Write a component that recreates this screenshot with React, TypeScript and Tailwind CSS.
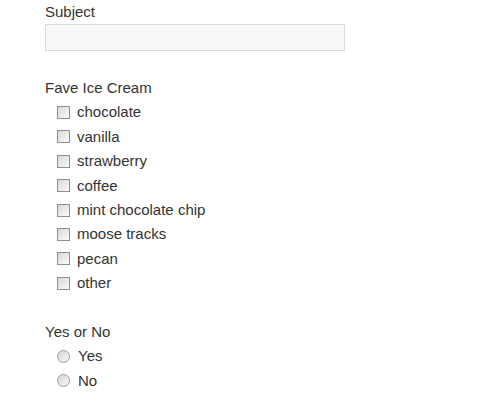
const flavors = [
  "chocolate",
  "vanilla",
  "strawberry",
  "coffee",
  "mint chocolate chip",
  "moose tracks",
  "pecan",
  "other",
];

export default function App() {
  return (
    <div className="min-h-[403px] bg-white pl-[45px] pt-[2px] font-['Liberation_Sans',Arial,sans-serif] text-[15px] text-[#333]">
      <label className="block leading-[20px]">Subject</label>
      <input
        type="text"
        className="mt-[2px] block h-[27px] w-[300px] border border-[#dcdcdc] bg-[#f7f7f7] outline-none"
      />

      <div className="mt-[25px] leading-[24.4px]">Fave Ice Cream</div>
      <div className="pl-[12px]">
        {flavors.map((f) => (
          <label key={f} className="flex h-[24.4px] items-center">
            <input
              type="checkbox"
              className="m-0 h-[13px] w-[13px] appearance-none border border-[#8f8f8f] bg-gradient-to-br from-[#d8d8d8] to-[#fbfbfb]"
            />
            <span className="ml-[7px] leading-[24.4px]">{f}</span>
          </label>
        ))}
      </div>

      <div className="mt-[24.4px] leading-[24.4px]">Yes or No</div>
      <div className="pl-[12px]">
        {["Yes", "No"].map((o) => (
          <label key={o} className="flex h-[24.4px] items-center">
            <input
              type="radio"
              name="yesno"
              className="m-0 h-[13px] w-[13px] appearance-none rounded-full border border-[#9a9a9a] bg-gradient-to-br from-[#d4d4d4] to-[#fafafa]"
            />
            <span className="ml-[8px] leading-[24.4px]">{o}</span>
          </label>
        ))}
      </div>
    </div>
  );
}
